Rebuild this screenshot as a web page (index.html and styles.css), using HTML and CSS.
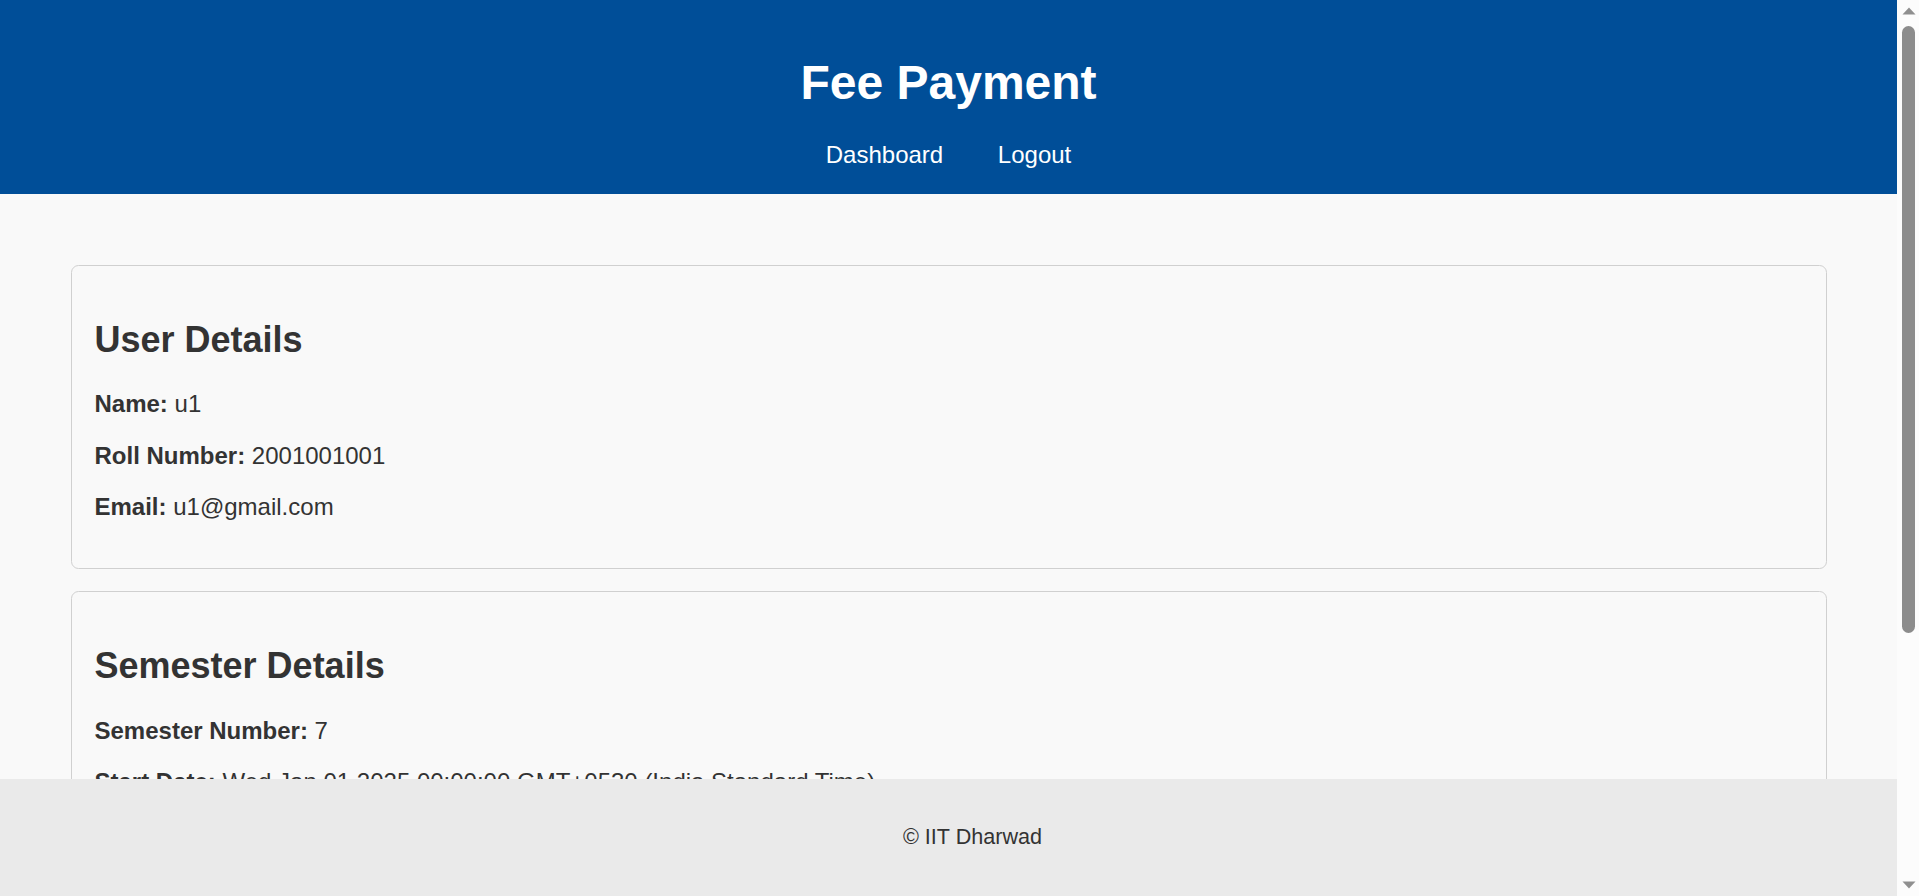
FILE: index.html
```html
<!DOCTYPE html>
<html lang="en">
<head>
<meta charset="utf-8">
<title>Fee Payment</title>
<link rel="stylesheet" href="styles.css">
</head>
<body class="window">
<div class="page">
  <div class="viewport">
    <header class="site-header">
      <h1 class="site-title">Fee Payment</h1>
      <nav class="site-nav">
        <a href="#" class="nav-link">Dashboard</a>
        <a href="#" class="nav-link">Logout</a>
      </nav>
    </header>
    <main class="content">
      <section class="card">
        <h2 class="card-title">User Details</h2>
        <p class="field"><strong>Name:</strong> u1</p>
        <p class="field"><strong>Roll Number:</strong> 2001001001</p>
        <p class="field"><strong>Email:</strong> u1@gmail.com</p>
      </section>
      <section class="card">
        <h2 class="card-title">Semester Details</h2>
        <p class="field"><strong>Semester Number:</strong> 7</p>
        <p class="field"><strong>Start Date:</strong> Wed Jan 01 2025 00:00:00 GMT+0530 (India Standard Time)</p>
        <p class="field"><strong>End Date:</strong> Wed Apr 30 2025 00:00:00 GMT+0530 (India Standard Time)</p>
      </section>
    </main>
  </div>
  <footer class="site-footer">
    <p class="footer-text">&copy; IIT Dharwad</p>
  </footer>
</div>
<div class="scrollbar" aria-hidden="true">
  <div class="sb-button">
    <svg class="sb-arrow" width="14" height="8" viewBox="0 0 14 8"><path d="M0.5 7.5 L7 0.5 L13.5 7.5 Z" fill="#8f8f8f"/></svg>
  </div>
  <div class="sb-track">
    <div class="sb-thumb"></div>
  </div>
  <div class="sb-button">
    <svg class="sb-arrow" width="14" height="8" viewBox="0 0 14 8"><path d="M0.5 0.5 L7 7.5 L13.5 0.5 Z" fill="#8f8f8f"/></svg>
  </div>
</div>
</body>
</html>
```

FILE: styles.css
```css
html, body {
  height: 100%;
}

body {
  margin: 0;
  background: #f9f9f9;
  color: #333333;
  font-family: "Liberation Sans", Arial, sans-serif;
  font-size: 24px;
}

.window {
  display: flex;
  height: 100vh;
  overflow: hidden;
}

.page {
  flex: 1;
  min-width: 0;
  display: flex;
  flex-direction: column;
}

.viewport {
  flex: 1;
  min-height: 0;
  overflow: hidden;
}

.site-header {
  background: #004e98;
  color: #ffffff;
  text-align: center;
  padding: 23px 0 25px;
}

.site-title {
  font-size: 48px;
  font-weight: bold;
  margin: 32px 0 31px;
  line-height: 55px;
}

.site-nav {
  line-height: 27.5px;
}

.nav-link {
  color: #ffffff;
  text-decoration: none;
  margin: 0 24px;
}

.content {
  padding: 49px 48px 48px;
}

.card {
  border: 1px solid #d0d0d0;
  border-radius: 7.5px;
  margin: 22.5px;
  padding: 23px;
  background: #f9f9f9;
}

.card-title {
  font-size: 36px;
  line-height: 41.4px;
  margin: 29.9px 0;
}

.field {
  margin: 24px 0;
  line-height: 27.6px;
}

.site-footer {
  flex: none;
  background: #eaeaea;
  text-align: center;
  padding-left: 48px;
}

.footer-text {
  margin: 0;
  padding: 45px 0 47px;
  font-size: 21.6px;
  line-height: 25px;
}

.scrollbar {
  flex: none;
  width: 22px;
  background: #fcfcfc;
  display: flex;
  flex-direction: column;
}

.sb-button {
  height: 22px;
  flex: none;
  display: flex;
  align-items: center;
  justify-content: center;
}

.sb-arrow {
  display: block;
  margin-left: 1px;
}

.sb-track {
  flex: 1;
  padding-top: 4px;
}

.sb-thumb {
  width: 13px;
  height: 607px;
  margin-left: 5px;
  background: #8c8c8c;
  border-radius: 7px;
}
```
